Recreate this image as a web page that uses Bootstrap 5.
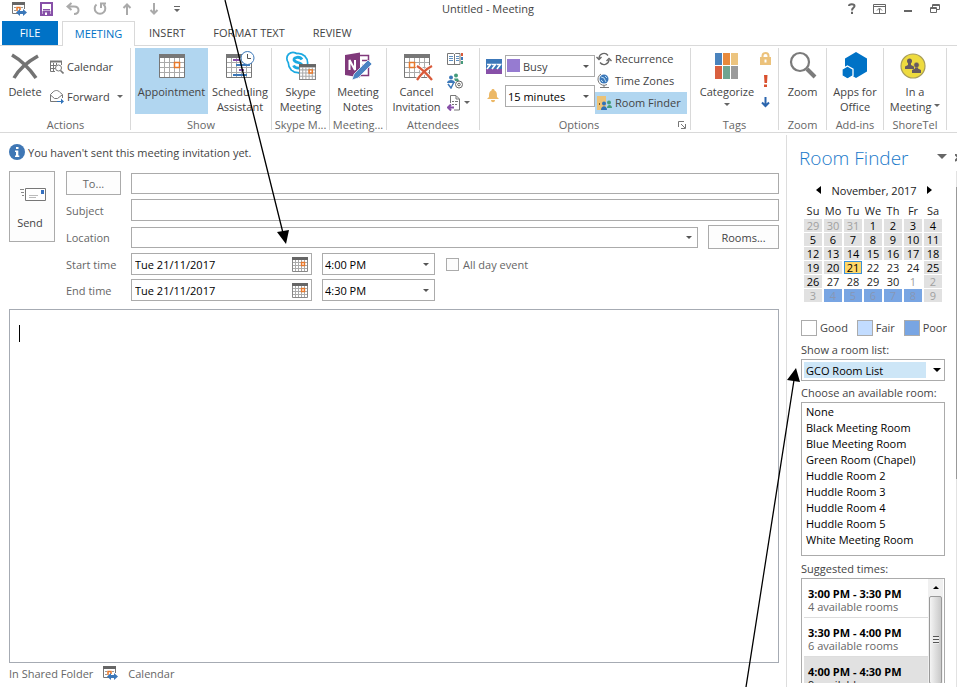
<!DOCTYPE html>
<html lang="en">
<head>
<meta charset="utf-8">
<meta name="viewport" content="width=device-width, initial-scale=1">
<title>Untitled - Meeting</title>
<link rel="stylesheet" href="https://cdn.jsdelivr.net/npm/bootstrap@5.3.0/dist/css/bootstrap.min.css">
<style>
:root { --ink:#444; --soft:#666; --line:#ababab; --rule:#d9d9d9; --accent:#0072c6; --pick:#b1d6f0; }
body { font-family:"Open Sans","Noto Sans",sans-serif; font-size:11px; line-height:15px; color:var(--ink); background:#fff; }
button, input, select, textarea { font:inherit; color:inherit; border-radius:0; }
svg { display:block; flex:none; }
.app { height:100vh; overflow:hidden; }
.plain { border:0; background:none; padding:0; }

.titlebar { height:21px; flex:none; padding:0 17px 4px 12px; }
.title-side { flex:1 1 0; }
.title-text { margin-left:24px; }
.quick { gap:13px; }
.wins { gap:17px; }

.tabs { height:25px; flex:none; padding-left:2px; border-bottom:1px solid var(--rule); }
.tabs .nav-link { height:24px; padding:0 14px; line-height:24px; color:var(--ink); border:0; border-radius:0; }
.tabs .file-tab { width:56px; padding:0; margin-right:4px; text-align:center; background:var(--accent); color:#fff; }
.tabs .open-tab { width:73px; height:25px; padding:0; text-align:center; color:var(--accent); border:1px solid var(--rule); border-bottom:0; background:#fff; }

.ribbon { height:87px; flex:none; padding:2px 0 0 1px; border-bottom:1px solid var(--rule); }
.group { border-right:1px solid var(--rule); flex:none; height:82px; }
.group-body { height:70px; flex:none; }
.group-name { color:var(--soft); text-align:center; height:14px; line-height:14px; }
.g-actions { width:130px; } .g-show { width:141px; } .g-skype { width:58px; } .g-notes { width:57px; }
.g-attend { width:93px; } .g-options { width:211px; } .g-tags { width:88px; } .g-zoom { width:48px; }
.g-apps { width:57px; } .g-shore { width:63px; }
.big { display:flex; flex:none; flex-direction:column; align-items:center; height:66px; padding:3px 0 0; white-space:nowrap; line-height:15px; }
.big svg { width:32px; height:30px; margin-bottom:3px; }
.big.picked { background:var(--pick); }
.w-show { width:73px; } .w-half { width:64px; } .w-fill { width:100%; } .w-act { width:48px; } .w-cancel { width:59px; }
.mini { display:flex; align-items:center; gap:3px; white-space:nowrap; height:22px; padding:0 1px 1px; }
.mini.picked { background:var(--pick); }
.caret { width:0; height:0; border:3px solid transparent; border-top-color:#666; border-bottom:0; display:inline-block; }
.picklist { appearance:none; border:1px solid var(--line); background:#fff url("data:image/svg+xml,%3Csvg xmlns='http://www.w3.org/2000/svg' width='6' height='3'%3E%3Cpath d='M0 0h6L3 3z' fill='%23555'/%3E%3C/svg%3E") no-repeat right 5px center; padding:0 12px 0 2px; }
.opt-col { width:115px; padding-top:7px; gap:8px; }
.opt-col label { padding-left:6px; }
.fin-col { width:92px; }
.opt-select { width:90px; height:22px; color:#000; }
.busy-wrap { position:relative; }
.busy-wrap .opt-select { padding-left:17px; color:var(--ink); }
.busy-dot { position:absolute; left:2px; top:4px; width:13px; height:13px; background:#967bd1; pointer-events:none; }

.form-side { padding:10px 7px 4px 9px; min-width:0; }
.info { height:18px; gap:3px; }
.fields { margin-top:10px; gap:11px; }
.send { width:46px; height:71px; border:1px solid var(--line); background:#fdfdfd; padding:0; }
.rows { gap:4px; min-width:0; }
.frow { height:24px; }
.frow.low { height:22px; }
.flabel { width:65px; flex:none; color:var(--soft); }
.to-btn { width:55px; height:24px; }
.outlined { border:1px solid var(--line); background:#fdfdfd; padding:0; }
.box { border:1px solid var(--line); background-color:#fff; height:21px; padding:0 3px; min-width:0; color:#222; }
.low .box { height:22px; }
.date { width:181px; margin-right:10px; padding:0 3px; }
.date input { border:0; padding:0; outline:0; width:100%; min-width:0; color:#000; }
.time { width:113px; height:22px; margin-right:11px; color:#000; }
.allday { color:var(--soft); }
.rooms-btn { width:71px; height:24px; margin-left:10px; }
.tick { appearance:none; width:13px; height:13px; border:1px solid var(--line); background:#fcfcfc; margin:0 4px 0 0; }
.note { margin-top:8px; border:1px solid #a6abb3; padding:15px 9px; }
.note-caret { width:1px; height:17px; background:#000; flex:none; }
.note textarea { border:0; resize:none; outline:0; padding:0; }
.foot { height:20px; gap:10px; color:var(--soft); }

.finder { width:171px; flex:none; border-left:1px solid #ddd; padding:9px 0 0 12px; margin-top:2px; overflow:hidden; }
.finder-main { width:146px; margin:0 9px 4px 2px; flex:none; overflow:hidden; }
.finder-title { font-size:19px; line-height:26px; font-weight:300; color:#1979ca; margin:0; white-space:nowrap; flex:none; }
.finder-head { height:27px; flex:none; gap:28px; }
.finder-head .wide { border-width:5px 5px 0; }
.rail { width:3px; background:#f0f0f0; border-left:1px solid #e2e2e2; flex:none; padding-top:16px; }
.rail-thumb { height:292px; margin-left:-1px; border:1px solid #999; border-right:0; background:#fff; }
.month { height:20px; margin-top:9px; padding:0 15px 0 15px; color:#222; }
.days { border-collapse:separate; border-spacing:2px 1px; table-layout:fixed; width:142px; margin:1px 0 0 1px; color:#222; text-align:center; }
.days th { font-weight:400; height:16px; padding:0; text-align:center; }
.days td { height:13px; line-height:13px; padding:0; }
.days .off { background:#e1e1e1; color:#000; }
.days .dim { color:#a0a0a0; }
.days .poor { background:#78a5e3; color:#8797b5; }
.days .today { background:#ffd767; box-shadow:inset 0 0 0 1px #3a8fd9; color:#000; }
.legend { margin-top:17px; height:16px; }
.swatch { width:16px; height:16px; border:1px solid var(--line); margin-right:3px; }
.sw-fair { background:#c2dcff; } .sw-poor { background:#78a5e3; }
.side-label { display:block; white-space:nowrap; margin-top:4px; padding-bottom:2px; }
.legend + .side-label { margin-top:6px; }
.room-box + .side-label { margin-top:5px; }
.finder select { display:block; }
.room-list { width:144px; height:22px; color:#000; background-image:url("data:image/svg+xml,%3Csvg xmlns='http://www.w3.org/2000/svg' width='8' height='4'%3E%3Cpath d='M0 0h8L4 4z'/%3E%3C/svg%3E"),linear-gradient(#cde6f7,#cde6f7); background-position:right 3px center,2px 2px; background-size:8px 4px,122px 16px; background-repeat:no-repeat; padding-left:4px; }
.room-box { width:144px; height:154px; border:1px solid var(--line); padding:1px 0 0; overflow:hidden; color:#000; background:#fff; outline:0; }
.room-box option { height:16px; line-height:16px; min-height:0; padding:0 4px; }
.times { width:144px; height:150px; border:1px solid var(--line); padding:0 1px 0 2px; color:#000; }
.slot { display:block; width:100%; text-align:left; height:39px; padding:3px 0 0 4px; line-height:13px; border-bottom:1px solid #ddd; white-space:nowrap; }
.slot-sub { display:block; color:var(--soft); }
.slot.on { background:#e1e1e1; } .slot.on .slot-sub { color:#222; }
.bar { width:15px; background:#f0f0f0; flex:none; }
.thumb { width:13px; height:88px; border:1px solid #999; border-radius:2px; background:linear-gradient(90deg,#f4f4f4,#c9c9c9); margin:0 auto; }
.grip { width:6px; height:8px; background:repeating-linear-gradient(#555 0 1px,#eee 1px 3px); }
.up { height:17px; }
.marks { position:absolute; left:0; top:0; pointer-events:none; }
</style>
<script src="https://cdn.jsdelivr.net/npm/bootstrap@5.3.0/dist/js/bootstrap.bundle.min.js"></script>
</head>
<body>
<svg width="0" height="0" class="position-absolute" aria-hidden="true">
  <symbol id="grid-cal" viewBox="0 0 26 24">
    <path d="M.5 3.500h25v20H.5z" fill="#fff" stroke="#777"/>
    <path d="M0 0h26v4H0z" fill="#777"/>
    <path d="M5.500 4v19M10.500 4v19M15.500 4v19M20.500 4v19M1 8.500h24M1 13.500h24M1 18.500h24" stroke="#aaa" fill="none"/>
  </symbol>
  <symbol id="mini-cal" viewBox="0 0 16 15">
    <path d="M.5 2.500h15v12H.5z" fill="#fff" stroke="#888"/>
    <path d="M0 0h16v3H0z" fill="#666"/>
    <path d="M3.500 3v11M6.500 3v11M9.500 3v11M12.500 3v11M1 5.500h14M1 8.500h14M1 11.500h14" stroke="#aaa" fill="none"/>
    <path d="M9.500 5.500h3v3h-3z" fill="#fff" stroke="#e8782a" stroke-width="1.400"/>
  </symbol>
  <symbol id="share-cal" viewBox="0 0 15 14">
    <path d="M.5 2v9.500H6M12.500 2v5" fill="none" stroke="#777"/>
    <path d="M0 0h13v3H0z" fill="#666"/>
    <path d="M2 5.500h2M2 8.500h2M9 5.500h2" stroke="#999"/>
    <path d="M5 9V5.500h3V8" fill="none" stroke="#e8782a" stroke-width="1.500"/>
    <path d="M4 10.500 8 7v2h3V7l4 3.500-4 3.500v-2H8v2z" fill="#3c78b9"/>
  </symbol>
</svg>

<div class="app d-flex flex-column position-relative">
  <header class="titlebar d-flex align-items-center">
    <div class="title-side d-flex align-items-center quick">
      <button class="plain" aria-label="Calendar"><svg width="15" height="14"><use href="#share-cal"/></svg></button>
      <button class="plain" aria-label="Save"><svg width="13" height="14" viewBox="0 0 13 14"><path d="M1 1h11v12H1z" fill="#fff" stroke="#8750a8" stroke-width="2"/><path d="M3 7.500h7M3 9h7v4H3z" fill="#8750a8" stroke="#8750a8"/><path d="M5 10.500h2V13H5z" fill="#fff"/></svg></button>
      <button class="plain" aria-label="Undo"><svg width="14" height="14" viewBox="0 0 14 14" fill="none" stroke="#aaa" stroke-width="2"><path d="M5.500 1 1.500 4.500l4 3.500M2 4.500h6c6 0 6 7.500 0 7.500"/></svg></button>
      <button class="plain" aria-label="Redo"><svg width="14" height="14" viewBox="0 0 14 14" fill="none" stroke="#aaa" stroke-width="2"><path d="M3.500 2.500a5.300 5.300 0 1 0 7 0M8 6V1.500h5"/></svg></button>
      <button class="plain" aria-label="Previous"><svg width="14" height="14" viewBox="0 0 14 14" fill="none" stroke="#aaa" stroke-width="2"><path d="M7 13V3M3.500 6 7 2.500 10.500 6"/></svg></button>
      <button class="plain" aria-label="Next"><svg width="14" height="14" viewBox="0 0 14 14" fill="none" stroke="#aaa" stroke-width="2"><path d="M7 1v10M3.500 8 7 11.500 10.500 8"/></svg></button>
      <button class="plain" aria-label="Customize"><svg width="6" height="8" viewBox="0 0 6 8" fill="#666"><path d="M0 1h6v1H0zM0 4h6L3 7z"/></svg></button>
    </div>
    <div class="title-text">Untitled - Meeting</div>
    <div class="title-side d-flex align-items-center justify-content-end wins">
      <button class="plain" aria-label="Help"><svg width="8" height="11" viewBox="0 0 8 11" fill="none" stroke="#666" stroke-width="2"><path d="M1 3C1 .5 6.500.5 6.500 3 6.500 5 4 4.500 4 7.500M4 8.800V11"/></svg></button>
      <button class="plain" aria-label="Ribbon display"><svg width="13" height="10" viewBox="0 0 13 10" fill="none" stroke="#666"><path d="M.5.5h12v9H.5zM1 2.500h11M6.500 9V5M4 6.500 6.500 4 9 6.500"/></svg></button>
      <button class="plain" aria-label="Minimize"><svg width="10" height="10" viewBox="0 0 10 10"><path d="M1 6h8v2H1z" fill="#666"/></svg></button>
      <button class="plain" aria-label="Restore"><svg width="10" height="10" viewBox="0 0 10 10" fill="none" stroke="#666"><path d="M.5 3.500h6v5h-6zM.5 4.500h6M2.500 3V.5h7v5H7M2.500 1.500h7"/></svg></button>
    </div>
  </header>

  <nav class="nav tabs flex-nowrap">
    <a class="nav-link file-tab" href="#">FILE</a>
    <a class="nav-link open-tab" href="#" aria-current="page">MEETING</a>
    <a class="nav-link" href="#">INSERT</a>
    <a class="nav-link" href="#">FORMAT TEXT</a>
    <a class="nav-link" href="#">REVIEW</a>
  </nav>

  <div class="ribbon d-flex">
    <section class="group g-actions">
      <div class="group-body d-flex">
        <button class="plain big w-act"><svg viewBox="0 0 32 30"><path d="M3 4C10 8 20 17 27 27M29 5C20 10 10 18 5 27" fill="none" stroke="#737373" stroke-width="3.500"/></svg>Delete</button>
        <div class="d-flex flex-column gap-2 pt-2">
          <button class="plain mini"><svg width="14" height="14" viewBox="0 0 14 14" fill="none" stroke="#777"><path d="M0 1.500h12" stroke-width="2"/><path d="M.5 2v9.500H5M11.500 2v3M3.500 3v8M6.500 3v2M1 5.500h5M1 8.500h4"/><circle cx="8.500" cy="8" r="3"/><path d="m10.500 10.500 3 3" stroke-width="1.600"/></svg>Calendar</button>
          <button class="plain mini"><svg width="14" height="14" viewBox="0 0 14 14" fill="none" stroke="#777"><path d="M7 11.500H.5v-7L3 2C5 0 8 0 9.500 2l3 2.500V8M.5 5l4 3.500h3L12 5"/><path d="M7 11h4V8.500l3 3-3 2.500v-2H7z" fill="#2f72b9" stroke="none"/></svg>Forward<span class="caret ms-1"></span></button>
        </div>
      </div>
      <div class="group-name">Actions</div>
    </section>

    <section class="group g-show">
      <div class="group-body d-flex ps-1">
        <button class="plain big picked w-show"><svg viewBox="0 0 32 30"><use href="#grid-cal" x="3" y="3" width="26" height="24"/><path d="M18.500 11.500h5v5h-5z" fill="#fff" stroke="#e8782a" stroke-width="1.500"/></svg>Appointment</button>
        <button class="plain big w-half"><svg viewBox="0 0 32 30"><use href="#grid-cal" x="2" y="3" width="26" height="24"/><path d="M9 9h7" stroke="#8750a8" stroke-width="2"/><path d="M12 14h14M9 24h14" stroke="#3c78b9" stroke-width="2"/><path d="M15 19h5" stroke="#8750a8" stroke-width="2"/><circle cx="23.500" cy="7" r="6.500" fill="#fff" stroke="#3c78b9"/><path d="M23.500 3v4.500H27" fill="none" stroke="#555"/></svg>Scheduling<br>Assistant</button>
      </div>
      <div class="group-name">Show</div>
    </section>

    <section class="group g-skype">
      <div class="group-body"><button class="plain big w-fill"><svg viewBox="0 0 32 30"><g fill="#1ba9e1"><circle cx="8" cy="7.500" r="7"/><circle cx="17.500" cy="17" r="7"/><circle cx="13" cy="12" r="10.500"/></g><g fill="#fff"><circle cx="8" cy="7.500" r="5.300"/><circle cx="17.500" cy="17" r="5.300"/><circle cx="13" cy="12" r="8.800"/></g><path d="M17 8.500C15 5 8.500 6 9 9c.5 3 8 2 8 5.500 0 3.500-7 3.500-8.500 0" fill="none" stroke="#1ba9e1" stroke-width="2.800"/><use href="#mini-cal" x="14" y="13" width="17" height="16"/></svg>Skype<br>Meeting</button></div>
      <div class="group-name">Skype M...</div>
    </section>

    <section class="group g-notes">
      <div class="group-body"><button class="plain big w-fill"><svg viewBox="0 0 32 30"><path d="M16 4.500h10.500v20H16M20 9.500h6M20 14.500h6" fill="#fff" stroke="#80397b" stroke-width="1.500"/><path d="m3 4 15-2.500v25L3 24z" fill="#80397b"/><path d="M7.500 19V9l5.500 10V9" fill="none" stroke="#fff" stroke-width="2"/><path d="m10 29 2-6L26 9l4 4-14 14z" fill="#4a83c2" stroke="#fff" stroke-width=".7"/></svg>Meeting<br>Notes</button></div>
      <div class="group-name">Meeting...</div>
    </section>

    <section class="group g-attend">
      <div class="group-body d-flex">
        <button class="plain big w-cancel"><svg viewBox="0 0 32 30"><use href="#grid-cal" x="3" y="3" width="26" height="24"/><path d="M8.500 11.500h5v5h-5z" fill="#fff" stroke="#e8782a" stroke-width="1.500"/><path d="M16 15c5 3 10 8 15 14M31 15c-6 3-11 8-15 14" fill="none" stroke="#fff" stroke-width="4"/><path d="M16 15c5 3 10 8 15 14M31 15c-6 3-11 8-15 14" fill="none" stroke="#d95b3b" stroke-width="2.300"/></svg>Cancel<br>Invitation</button>
        <div class="d-flex flex-column">
          <button class="plain mini" aria-label="Address Book"><svg width="16" height="14" viewBox="0 0 16 14" fill="none" stroke="#777"><path d="M.5 1.500h6l1 1 1-1H13v11H.5zM7.500 2v10"/><path d="M2 4.500h4M2 6.500h4M2 8.500h4M9 4.500h3M9 6.500h3M9 8.500h3" stroke="#5d8fc2"/><path d="M15 1v3" stroke="#d95b3b" stroke-width="2"/><path d="M15 5v3" stroke="#3c78b9" stroke-width="2"/><path d="M15 9v3" stroke="#459b7b" stroke-width="2"/></svg></button>
          <button class="plain mini" aria-label="Check Names"><svg width="16" height="16" viewBox="0 0 16 16"><circle cx="4" cy="4.500" r="2" fill="#3c78b9"/><path d="M0 10c0-4 8-4 8 0z" fill="#3c78b9"/><circle cx="9" cy="2.500" r="2" fill="#459b7b"/><path d="M7 5.500h4l1 2.500H8z" fill="#459b7b"/><path d="m1 11 3 4 3-6" fill="none" stroke="#3c78b9" stroke-width="1.500"/><circle cx="12" cy="11.500" r="3.500" fill="none" stroke="#666"/><circle cx="12" cy="11.500" r="1.300" fill="none" stroke="#666"/></svg></button>
          <button class="plain mini" aria-label="Response Options"><svg width="14" height="16" viewBox="0 0 14 16" fill="none" stroke="#777"><path d="M3.500 8V.5H9L12.500 4v11H7M9 1v3h3"/><path d="M5 6.500h2M5 9.500h2M8 6.500h3M8 9.500h2"/><path d="M7 12.500H2M4 9.500l-3 3 3 3" stroke="#8750a8" stroke-width="2"/></svg><span class="caret"></span></button>
        </div>
      </div>
      <div class="group-name">Attendees</div>
    </section>

    <section class="group g-options">
      <div class="group-body d-flex">
        <div class="d-flex flex-column opt-col">
          <label class="d-flex align-items-center justify-content-between"><svg width="16" height="15" viewBox="0 0 16 15" role="img" aria-label="Show As"><path d="M0 0h16v10H0z" fill="#3c78b9"/><path d="M0 10h16v5H0z" fill="#8750a8"/><path d="M1 5.500h3.500L1 10M6 5.500h3.500L6 10M11 5.500h3.500L11 10" fill="none" stroke="#fff" stroke-width="1.600"/></svg><span class="busy-wrap"><select class="picklist opt-select"><option>Busy</option></select><span class="busy-dot"></span></span></label>
          <label class="d-flex align-items-center justify-content-between"><svg width="14" height="14" viewBox="0 0 14 14" fill="#ecb866" role="img" aria-label="Reminder"><path d="M7 0c1 0 1.500.5 1.500 1.500C11 2.500 11 5 11 8l2 2H1l2-2c0-3 0-5.500 2.500-6.500C5.500.5 6 0 7 0zM5 11h4c0 3-4 3-4 0z"/></svg><select class="picklist opt-select"><option>15 minutes</option></select></label>
        </div>
        <div class="d-flex flex-column fin-col">
          <button class="plain mini"><svg width="16" height="14" viewBox="0 0 16 14" fill="none" stroke="#666" stroke-width="1.300"><path d="M3 6a5 5 0 0 1 9-2.500M13 8a5 5 0 0 1-9 2.500M.5 5 3 7.500 5.500 5M10.500 9 13 6.500 15.500 9"/></svg>Recurrence</button>
          <button class="plain mini"><svg width="16" height="15" viewBox="0 0 16 15" fill="none"><circle cx="8" cy="6" r="4.500" fill="#3c78b9"/><path d="M5 4l3 1 2 4M9 3l2 2M5 7l2 2" stroke="#b9dcf3"/><path d="M5 1a6 6 0 0 0 6 10.500M8 12v2M4 14.500h9" stroke="#777"/></svg>Time Zones</button>
          <button class="plain mini picked"><svg width="16" height="16" viewBox="0 0 16 16"><path d="M1 1h9v14H1z" fill="#ecc276"/><path d="M3 8h1v2H3z" fill="#7b5c23"/><circle cx="8" cy="8.500" r="2" fill="#2f72b9"/><path d="M5 15c0-5 6-5 6 0z" fill="#2f72b9"/><circle cx="13" cy="7.500" r="2" fill="#459b7b"/><path d="M11 13c0-4 5-4 5 0z" fill="#459b7b"/></svg>Room Finder</button>
        </div>
      </div>
      <div class="d-flex align-items-center"><div class="group-name flex-fill">Options</div><button class="plain me-1" aria-label="Options dialog"><svg width="8" height="8" viewBox="0 0 8 8" fill="none" stroke="#777"><path d="M.5 6V.5H6M3 3l4 4M7.500 3v4.500H3"/></svg></button></div>
    </section>

    <section class="group g-tags">
      <div class="group-body d-flex">
        <button class="plain big w-half ms-1"><svg viewBox="0 0 32 30"><path d="M4 2h7v12H4z" fill="#4a83bd"/><path d="M12 2h7v12h-7z" fill="#e88a3c"/><path d="M20 2h7v12h-7z" fill="#ecc47f"/><path d="M4 15h7v13H4z" fill="#d9603f"/><path d="M12 15h7v13h-7z" fill="#6fa591"/><path d="M20 15h7v13h-7z" fill="#9b9b9b"/></svg>Categorize<span class="caret mt-1"></span></button>
        <div class="d-flex flex-column">
          <button class="plain mini" aria-label="Private"><svg width="11" height="14" viewBox="0 0 11 14"><path d="M2.500 7V4a3 3 0 0 1 6 0v3" fill="none" stroke="#ecc27b" stroke-width="2"/><path d="M0 5h11v8H0z" fill="#ecc27b"/><path d="M4.500 7.500h2v3h-2z" fill="#fff"/></svg></button>
          <button class="plain mini" aria-label="High Importance"><svg width="11" height="12" viewBox="0 0 11 12" fill="#d9502e"><path d="M4 0h3.500L7 8H4.500zM4 9.500h3V12H4z"/></svg></button>
          <button class="plain mini" aria-label="Low Importance"><svg width="11" height="11" viewBox="0 0 11 11" fill="none" stroke="#2b65ad" stroke-width="2"><path d="M5.500 0v9M2 5.500 5.500 9 9 5.500"/></svg></button>
        </div>
      </div>
      <div class="group-name">Tags</div>
    </section>

    <section class="group g-zoom">
      <div class="group-body"><button class="plain big w-fill"><svg viewBox="0 0 32 30" fill="none" stroke="#7b7b7b"><circle cx="13" cy="11" r="9" stroke-width="2.200"/><path d="m20 18 8 8" stroke-width="4"/></svg>Zoom</button></div>
      <div class="group-name">Zoom</div>
    </section>
    <section class="group g-apps">
      <div class="group-body"><button class="plain big w-fill"><svg viewBox="0 0 32 30" fill="#0072c6"><path d="m17 1 11 6.500v13L17 27 6 20.500v-13z"/><path d="m8.500 15 5.500 3.200v6.500L8.500 28 3 24.700v-6.500z" stroke="#fff" stroke-width="1.300"/></svg>Apps for<br>Office</button></div>
      <div class="group-name">Add-ins</div>
    </section>
    <section class="group g-shore">
      <div class="group-body"><button class="plain big w-fill"><svg viewBox="0 0 32 30"><circle cx="14" cy="15" r="12" fill="#eedb3f" stroke="#a89d5b" stroke-width="1.200"/><circle cx="10.500" cy="10" r="2.500" fill="#665a61"/><path d="M6 18v-2.500l3-1.500v-2h3v2l3 1.500V18z" fill="#665a61"/><circle cx="17.500" cy="14" r="2.700" fill="#665a61" stroke="#eedb3f" stroke-width=".5"/><path d="M13 22v-3l3-1.500v-1h3v1l3 1.500v3z" fill="#665a61"/></svg>In a<br><span>Meeting <span class="caret mb-1"></span></span></button></div>
      <div class="group-name">ShoreTel</div>
    </section>
  </div>

  <div class="d-flex flex-fill overflow-hidden">
    <main class="form-side d-flex flex-column flex-fill">
      <div class="info d-flex align-items-center"><svg width="16" height="16" viewBox="0 0 16 16"><circle cx="8" cy="8" r="8" fill="#3f77b5"/><path d="M7 3h2.500v2H7zM6 6.500h3.300v5h1V13H6v-1.500h1V8H6z" fill="#fff"/></svg>You haven't sent this meeting invitation yet.</div>
      <div class="fields d-flex">
        <button class="send d-flex flex-column align-items-center justify-content-center flex-shrink-0"><svg width="27" height="27" viewBox="0 0 27 27" fill="none"><path d="M6.500 4.500h20v12h-20z" fill="#fff" stroke="#777"/><path d="M1 5.500h4M2 8.500h3M3 11.500h2" stroke="#888"/><path d="M10 11.500h9M10 13.500h7" stroke="#bbb"/><path d="M22 6h3v4h-3z" fill="#3570c0"/></svg><span class="pe-1 pt-1">Send</span></button>
        <div class="rows d-flex flex-column flex-fill">
          <div class="frow d-flex align-items-center"><div class="flabel"><button class="outlined to-btn">To...</button></div><input class="box flex-fill" aria-label="To"></div>
          <div class="frow low d-flex align-items-center"><label class="flabel" for="subject">Subject</label><input id="subject" class="box flex-fill"></div>
          <div class="frow d-flex align-items-center"><label class="flabel" for="place">Location</label><select id="place" class="picklist box flex-fill"><option></option></select><button class="outlined rooms-btn">Rooms...</button></div>
          <div class="frow low d-flex align-items-center"><label class="flabel" for="start">Start time</label><div class="box date d-flex align-items-center"><input id="start" value="Tue 21/11/2017"><button class="plain" aria-label="Pick start date"><svg width="16" height="15"><use href="#mini-cal"/></svg></button></div><select class="picklist time" aria-label="Start hour"><option>4:00 PM</option></select><label class="allday d-flex align-items-center"><input class="tick" type="checkbox">All day event</label></div>
          <div class="frow low d-flex align-items-center"><label class="flabel" for="end">End time</label><div class="box date d-flex align-items-center"><input id="end" value="Tue 21/11/2017"><button class="plain" aria-label="Pick end date"><svg width="16" height="15"><use href="#mini-cal"/></svg></button></div><select class="picklist time" aria-label="End hour"><option>4:30 PM</option></select></div>
        </div>
      </div>
      <div class="note d-flex flex-fill"><span class="note-caret"></span><textarea class="flex-fill" aria-label="Message"></textarea></div>
      <footer class="foot d-flex align-items-center flex-shrink-0"><span>In Shared Folder</span><svg width="15" height="14"><use href="#share-cal"/></svg><span>Calendar</span></footer>
    </main>

    <aside class="finder d-flex flex-column">
      <div class="finder-head d-flex align-items-center"><h1 class="finder-title">Room Finder</h1><button class="plain d-flex gap-2" aria-label="Pane options"><span class="caret wide"></span><svg width="8" height="8" viewBox="0 0 8 8"><path d="m0 0 7 7M7 0 0 7" stroke="#666" stroke-width="2"/></svg></button></div>
      <div class="d-flex flex-fill overflow-hidden">
        <div class="finder-main">
          <div class="month d-flex align-items-center justify-content-between"><button class="plain" aria-label="Previous month"><svg width="5" height="8" viewBox="0 0 5 8"><path d="M5 0v8L0 4z"/></svg></button><span>November, 2017</span><button class="plain" aria-label="Next month"><svg width="5" height="8" viewBox="0 0 5 8"><path d="M0 0v8l5-4z"/></svg></button></div>
          <table class="days">
            <thead><tr><th>Su</th><th>Mo</th><th>Tu</th><th>We</th><th>Th</th><th>Fr</th><th>Sa</th></tr></thead>
            <tbody>
              <tr><td class="off dim">29</td><td class="off dim">30</td><td class="off dim">31</td><td class="off">1</td><td class="off">2</td><td class="off">3</td><td class="off">4</td></tr>
              <tr><td class="off">5</td><td class="off">6</td><td class="off">7</td><td class="off">8</td><td class="off">9</td><td class="off">10</td><td class="off">11</td></tr>
              <tr><td class="off">12</td><td class="off">13</td><td class="off">14</td><td class="off">15</td><td class="off">16</td><td class="off">17</td><td class="off">18</td></tr>
              <tr><td class="off">19</td><td class="off">20</td><td class="today">21</td><td>22</td><td>23</td><td>24</td><td class="off">25</td></tr>
              <tr><td class="off">26</td><td>27</td><td>28</td><td>29</td><td>30</td><td class="dim">1</td><td class="off dim">2</td></tr>
              <tr><td class="off dim">3</td><td class="poor">4</td><td class="poor">5</td><td class="poor">6</td><td class="poor">7</td><td class="poor">8</td><td class="off dim">9</td></tr>
            </tbody>
          </table>
          <div class="legend d-flex align-items-center justify-content-between"><span class="d-flex"><i class="swatch"></i>Good</span><span class="d-flex"><i class="swatch sw-fair"></i>Fair</span><span class="d-flex"><i class="swatch sw-poor"></i>Poor</span></div>
          <label class="side-label" for="roomlist">Show a room list:</label>
          <select id="roomlist" class="picklist room-list"><option>GCO Room List</option></select>
          <label class="side-label" for="rooms">Choose an available room:</label>
          <select id="rooms" class="room-box" size="9"><option>None</option><option>Black Meeting Room</option><option>Blue Meeting Room</option><option>Green Room (Chapel)</option><option>Huddle Room 2</option><option>Huddle Room 3</option><option>Huddle Room 4</option><option>Huddle Room 5</option><option>White Meeting Room</option></select>
          <div class="side-label">Suggested times:</div>
          <div class="times d-flex">
            <div class="flex-fill">
              <button class="plain slot"><b>3:00 PM - 3:30 PM</b><span class="slot-sub">4 available rooms</span></button>
              <button class="plain slot"><b>3:30 PM - 4:00 PM</b><span class="slot-sub">6 available rooms</span></button>
              <button class="plain slot on"><b>4:00 PM - 4:30 PM</b><span class="slot-sub">9 available rooms</span></button>
            </div>
            <div class="bar"><div class="up d-flex align-items-center justify-content-center"><svg width="6" height="3" viewBox="0 0 6 3"><path d="M3 0l3 3H0z"/></svg></div><div class="thumb d-flex align-items-center justify-content-center"><span class="grip"></span></div></div>
          </div>
        </div>
        <div class="rail flex-fill"><div class="rail-thumb"></div></div>
      </div>
    </aside>
  </div>

  <svg class="marks" width="957" height="687" viewBox="0 0 957 687" aria-hidden="true"><path d="m225 0 58 233M746 687l48-307" stroke="#000" stroke-width="1.300" fill="none"/><path d="m286 244-9-12 12-2zM796 368l-9 12 13 2z"/></svg>
</div>
</body>
</html>
